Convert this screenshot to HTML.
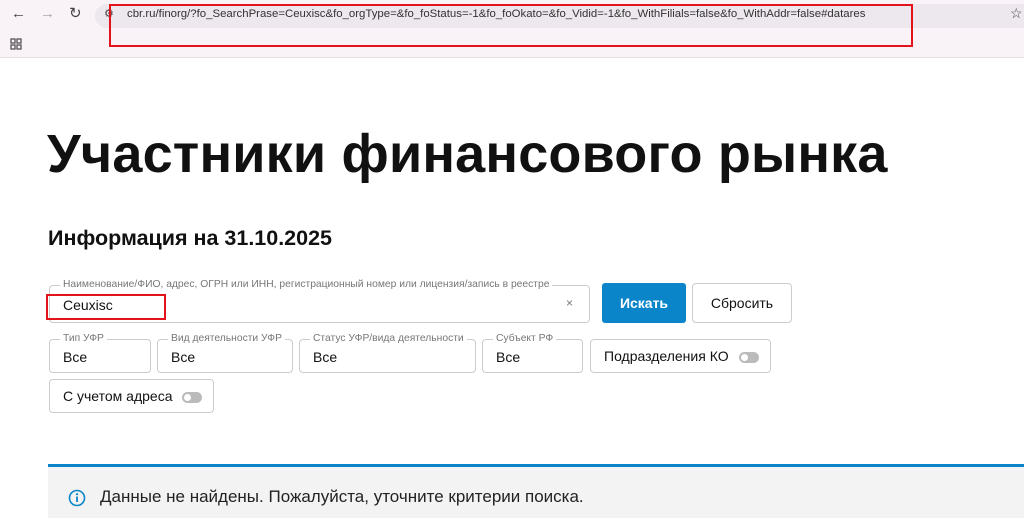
<!DOCTYPE html>
<html><head><meta charset="utf-8"><style>
*{margin:0;padding:0;box-sizing:border-box}
body{width:1024px;height:518px;overflow:hidden;background:#fff;font-family:"Liberation Sans",sans-serif;color:#111;position:relative}
.abs{position:absolute}
.top{left:0;top:0;width:1024px;height:58px;background:#f9f3f7;border-bottom:1px solid #e6e0e4}
.url{left:95px;top:4px;width:940px;height:24px;background:#ede7ee;border-radius:12px}
.box{position:absolute;border:1px solid #ccc;border-radius:4px;background:#fff}
.lbl{position:absolute;top:-7px;left:10px;background:#fff;padding:0 3px;font-size:10.3px;color:#777;white-space:nowrap}
.val{position:absolute;left:13px;top:9px;font-size:14px;color:#111}
.tog{display:inline-block;width:20px;height:11px;border-radius:6px;background:#bbb;position:relative;vertical-align:middle;margin-left:10px}
.tog:after{content:"";position:absolute;left:2px;top:2px;width:7px;height:7px;border-radius:50%;background:#fff}
</style></head><body>
<div class="abs top"></div>
<div class="abs url"></div>
<div class="abs" style="left:11px;top:5px;font-size:15px;color:#444">←</div>
<div class="abs" style="left:40px;top:5px;font-size:15px;color:#aaa">→</div>
<div class="abs" style="left:69px;top:4px;font-size:15px;color:#444">↻</div>
<div class="abs" style="left:104px;top:7px;font-size:11px;color:#444">⚙</div>
<div class="abs" style="left:127px;top:8px;font-size:11.4px;color:#333;white-space:nowrap">cbr.ru/finorg/?fo_SearchPrase=Ceuxisc&amp;fo_orgType=&amp;fo_foStatus=-1&amp;fo_foOkato=&amp;fo_Vidid=-1&amp;fo_WithFilials=false&amp;fo_WithAddr=false#datares</div>
<div class="abs" style="left:1010px;top:5px;font-size:14px;color:#444">☆</div>
<svg class="abs" style="left:10px;top:38px" width="12" height="12"><g fill="none" stroke="#555" stroke-width="1.3"><rect x="1" y="1" width="4" height="4"/><rect x="7" y="1" width="4" height="4"/><rect x="1" y="7" width="4" height="4"/><rect x="7" y="7" width="4" height="4"/></g></svg>
<div class="abs" style="left:109px;top:4px;width:804px;height:43px;border:2px solid #e3131b"></div>

<div class="abs" style="left:47px;top:123px;font-size:54px;font-weight:bold;letter-spacing:0.2px;white-space:nowrap;color:#111">Участники финансового рынка</div>
<div class="abs" style="left:48px;top:226px;font-size:21.5px;font-weight:bold;white-space:nowrap">Информация на 31.10.2025</div>

<div class="box" style="left:49px;top:285px;width:541px;height:38px"><div class="lbl">Наименование/ФИО, адрес, ОГРН или ИНН, регистрационный номер или лицензия/запись в реестре</div><div class="val" style="top:11px">Ceuxisc</div><div style="position:absolute;right:16px;top:10px;font-size:12px;color:#777">×</div></div>
<div class="abs" style="left:46px;top:294px;width:120px;height:26px;border:2px solid #e3131b"></div>
<div class="abs" style="left:602px;top:283px;width:84px;height:40px;background:#0a85c9;border-radius:3px;color:#fff;font-weight:bold;font-size:14px;text-align:center;line-height:40px">Искать</div>
<div class="box" style="left:692px;top:283px;width:100px;height:40px;text-align:center;line-height:38px;font-size:14px">Сбросить</div>

<div class="box" style="left:49px;top:339px;width:102px;height:34px"><div class="lbl">Тип УФР</div><div class="val">Все</div></div>
<div class="box" style="left:157px;top:339px;width:136px;height:34px"><div class="lbl">Вид деятельности УФР</div><div class="val">Все</div></div>
<div class="box" style="left:299px;top:339px;width:177px;height:34px"><div class="lbl">Статус УФР/вида деятельности</div><div class="val">Все</div></div>
<div class="box" style="left:482px;top:339px;width:101px;height:34px"><div class="lbl">Субъект РФ</div><div class="val">Все</div></div>
<div class="box" style="left:590px;top:339px;width:181px;height:34px;font-size:14px;padding:8px 0 0 13px">Подразделения КО<span class="tog"></span></div>
<div class="box" style="left:49px;top:379px;width:165px;height:34px;font-size:14px;padding:8px 0 0 13px">С учетом адреса<span class="tog"></span></div>

<div class="abs" style="left:48px;top:464px;width:976px;height:54px;background:#f3f3f3;border-top:3px solid #0a85c9"></div>
<svg class="abs" style="left:68px;top:489px" width="18" height="18"><circle cx="9" cy="9" r="7.5" fill="none" stroke="#0a85c9" stroke-width="1.6"/><rect x="8.1" y="7.5" width="1.8" height="5.5" fill="#0a85c9"/><circle cx="9" cy="5.2" r="1.1" fill="#0a85c9"/></svg>
<div class="abs" style="left:100px;top:487px;font-size:17px;color:#222;white-space:nowrap">Данные не найдены. Пожалуйста, уточните критерии поиска.</div>
</body></html>
